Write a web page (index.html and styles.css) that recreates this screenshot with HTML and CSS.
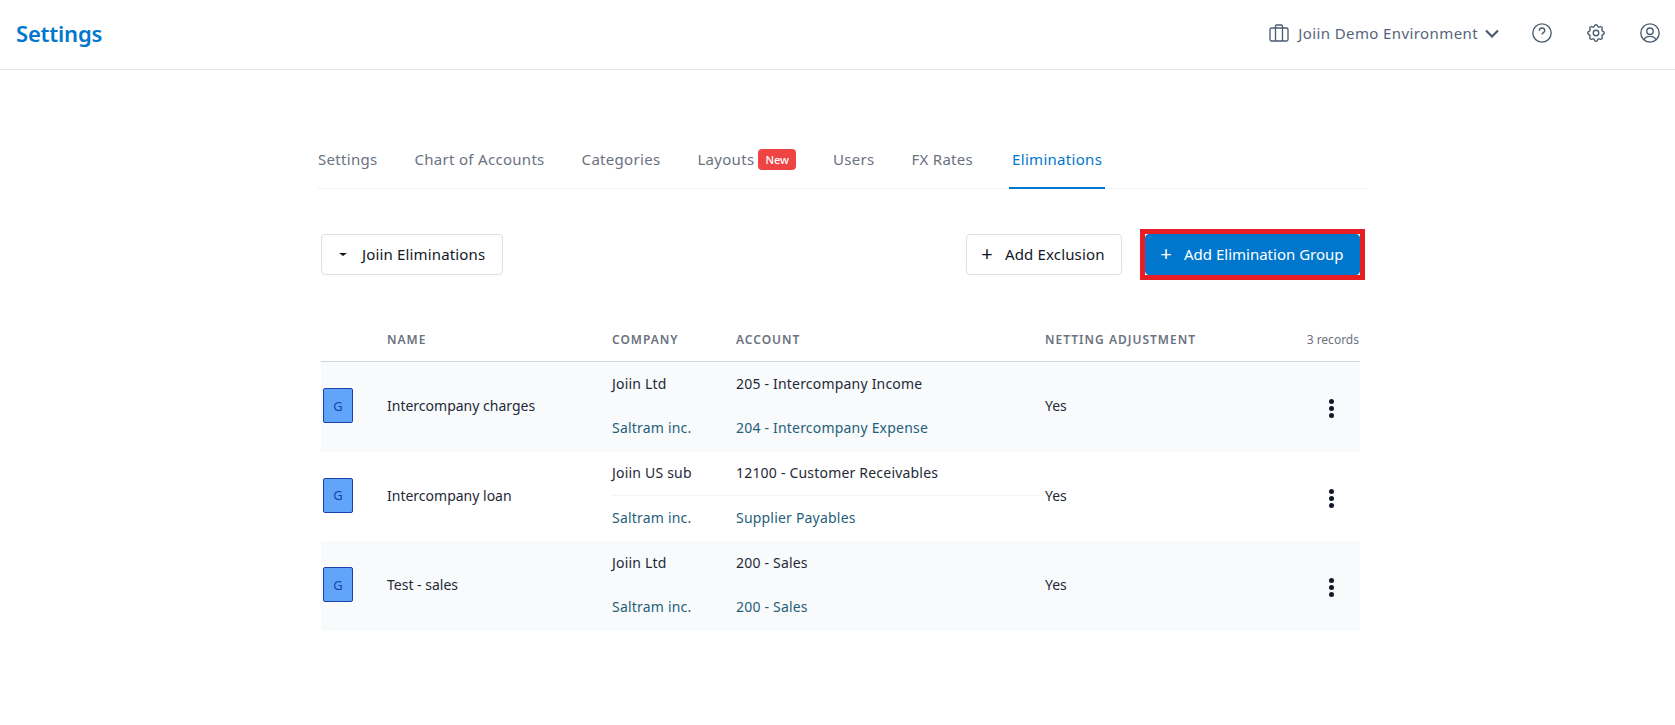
FILE: index.html
```html
<!DOCTYPE html>
<html lang="en">
<head>
<meta charset="utf-8">
<title>Settings</title>
<link rel="stylesheet" href="styles.css">
</head>
<body>
<header class="topbar">
  <h1 class="title">Settings</h1>
  <div class="top-actions">
    <div class="env">
      <svg class="icon-brief" viewBox="0 0 20 18" fill="none" stroke="currentColor" stroke-width="1.3"><rect x="1" y="4" width="18" height="13" rx="1.5"/><path d="M6.5 4V2a1 1 0 0 1 1-1h5a1 1 0 0 1 1 1v2M6.5 4v13M13.500 4v13"/></svg>
      <span class="env-name">Joiin Demo Environment</span>
      <svg class="icon-chev" viewBox="0 0 14 9" fill="none" stroke="currentColor" stroke-width="2.200"><path d="M1 1.500l6 6 6-6"/></svg>
    </div>
    <svg class="icon-top" viewBox="0 0 24 24" fill="none" stroke="currentColor" stroke-width="1.500"><circle cx="12" cy="12" r="10"/><path d="M9 9.500a3 3 0 0 1 6 0c0 1.900-3 2.200-3 4.200M12 16.800v.5"/></svg>
    <svg class="icon-top" viewBox="0 0 24 24" fill="none" stroke="currentColor" stroke-width="1.500" stroke-linejoin="round"><path d="M10.325 4.317c.426-1.756 2.924-1.756 3.35 0a1.724 1.724 0 002.573 1.066c1.543-.94 3.31.826 2.37 2.37a1.724 1.724 0 001.065 2.572c1.756.426 1.756 2.924 0 3.35a1.724 1.724 0 00-1.066 2.573c.94 1.543-.826 3.31-2.37 2.37a1.724 1.724 0 00-2.572 1.065c-.426 1.756-2.924 1.756-3.35 0a1.724 1.724 0 00-2.573-1.066c-1.543.94-3.31-.826-2.37-2.37a1.724 1.724 0 00-1.065-2.572c-1.756-.426-1.756-2.924 0-3.35a1.724 1.724 0 001.066-2.573c-.94-1.543.826-3.31 2.37-2.37.996.608 2.296.07 2.572-1.065z"/><path d="M15 12a3 3 0 11-6 0 3 3 0 016 0z"/></svg>
    <svg class="icon-top" viewBox="0 0 24 24" fill="none" stroke="currentColor" stroke-width="1.500"><circle cx="12" cy="12" r="10"/><circle cx="12" cy="10" r="3.500"/><path d="M5.500 19.500c.8-2.600 3-3.800 6.500-3.800s5.700 1.200 6.500 3.800"/></svg>
  </div>
</header>

<main class="page">
  <nav class="tabs">
    <a class="tab">Settings</a>
    <a class="tab">Chart of Accounts</a>
    <a class="tab">Categories</a>
    <a class="tab">Layouts <span class="badge">New</span></a>
    <a class="tab">Users</a>
    <a class="tab">FX Rates</a>
    <a class="tab active">Eliminations</a>
  </nav>

  <div class="toolbar">
    <button class="btn btn-select"><span class="caret"></span>Joiin Eliminations</button>
    <div class="toolbar-right">
      <button class="btn btn-exclusion"><span class="plus">+</span>Add Exclusion</button>
      <div class="highlight"><button class="btn btn-primary"><span class="plus">+</span>Add Elimination Group</button></div>
    </div>
  </div>

  <section class="table">
    <div class="row head">
      <span></span>
      <span class="th">NAME</span>
      <div class="pairs"><div class="pair"><span class="th">COMPANY</span><span class="th">ACCOUNT</span></div></div>
      <span class="th">NETTING ADJUSTMENT</span>
      <span class="records">3 records</span>
    </div>

    <div class="row body shade">
      <span class="tag">G</span>
      <span>Intercompany charges</span>
      <div class="pairs">
        <div class="pair first"><span>Joiin Ltd</span><span>205 - Intercompany Income</span></div>
        <div class="pair second"><span>Saltram inc.</span><span>204 - Intercompany Expense</span></div>
      </div>
      <span>Yes</span>
      <span class="dots"><i></i><i></i><i></i></span>
    </div>

    <div class="row body">
      <span class="tag">G</span>
      <span>Intercompany loan</span>
      <div class="pairs">
        <div class="pair first"><span>Joiin US sub</span><span>12100 - Customer Receivables</span></div>
        <div class="pair second"><span>Saltram inc.</span><span>Supplier Payables</span></div>
      </div>
      <span>Yes</span>
      <span class="dots"><i></i><i></i><i></i></span>
    </div>

    <div class="row body shade">
      <span class="tag">G</span>
      <span>Test - sales</span>
      <div class="pairs">
        <div class="pair first"><span>Joiin Ltd</span><span>200 - Sales</span></div>
        <div class="pair second"><span>Saltram inc.</span><span>200 - Sales</span></div>
      </div>
      <span>Yes</span>
      <span class="dots"><i></i><i></i><i></i></span>
    </div>
  </section>
</main>
</body>
</html>
```

FILE: styles.css
```css
* { box-sizing: border-box; }
html, body { margin: 0; padding: 0; background: #fff; }
body {
  font-family: "Noto Sans", "Open Sans", sans-serif;
  font-size: 14px;
  color: #111827;
  height: 725px;
  overflow: hidden;
}

.topbar {
  height: 70px;
  display: flex;
  align-items: center;
  justify-content: space-between;
  padding: 0 14px 3px 16px;
  border-bottom: 1px solid #e2e8f0;
}
.title {
  margin: 0;
  font-size: 22px;
  font-weight: 600;
  color: #0077cc;
  letter-spacing: -0.2px;
}
.top-actions { display: flex; align-items: center; gap: 32px; color: #4b5b70; }
.env { display: flex; align-items: center; }
.icon-brief { width: 20px; height: 18px; margin-right: 9px; }
.env-name { font-size: 15px; letter-spacing: 0.4px; color: #55647a; }
.icon-chev { width: 14px; height: 9px; margin-left: 7px; }
.icon-top { width: 22px; height: 22px; display: block; }

.page { width: 1050px; margin-left: 317px; }

.tabs {
  margin-top: 60px;
  height: 59px;
  display: flex;
  gap: 34px;
  border-bottom: 1px solid #f3f4f6;
  font-size: 15px;
}
.tab {
  display: flex;
  align-items: center;
  gap: 4px;
  height: 59px;
  padding: 0 2px 0 1px;
  border-bottom: 2px solid transparent;
  color: #6b7280;
  letter-spacing: 0.3px;
}
.tab.active { color: #0077cc; border-bottom-color: #0077cc; padding: 0 3px; }
.badge {
  background: #ef4444;
  color: #fff;
  font-size: 11px;
  font-weight: 500;
  line-height: 21px;
  height: 21px;
  padding: 0 7px;
  border-radius: 4px;
  letter-spacing: 0;
  margin-top: 2px;
}

.toolbar {
  margin: 40px 7px 0 4px;
  display: flex;
  align-items: center;
  justify-content: space-between;
}
.toolbar-right { display: flex; align-items: center; gap: 18px; }
.btn {
  height: 41px;
  display: flex;
  align-items: center;
  font: inherit;
  font-size: 15px;
  letter-spacing: 0.15px;
  color: #111827;
  background: #fff;
  border: 1px solid #e0e0e0;
  border-radius: 4px;
  padding: 0 17px 2px;
  white-space: nowrap;
}
.btn-select { width: 182px; }
.btn-exclusion { width: 156px; padding: 0 14px 2px; }
.caret {
  width: 0; height: 0;
  border-left: 4px solid transparent;
  border-right: 4px solid transparent;
  border-top: 3px solid #111827;
  margin-right: 15px;
  margin-top: 2px;
}
.plus { font-size: 20px; line-height: 1; width: 12px; margin-right: 12px; text-align: center; }
.highlight { border: 5px solid #e91e24; margin-right: -5px; }
.btn-primary {
  width: 215px;
  background: #0077cc;
  border-color: #0077cc;
  color: #fff;
  padding: 0 14px 2px;
  letter-spacing: 0;
}

.table { margin: 38px 7px 0 4px; }
.row {
  display: grid;
  grid-template-columns: 66px 225px 433px 1fr 60px;
  align-items: center;
}
.row.head { height: 44px; border-bottom: 1px solid #d1d5db; }
.th { font-size: 12px; font-weight: 600; color: #6b7280; letter-spacing: 1px; }
.records { font-size: 12px; color: #6b7280; text-align: right; white-space: nowrap; padding-right: 1px; justify-self: end; }
.pair { display: grid; grid-template-columns: 124px 1fr; align-items: center; }
.row.body { height: 89.500px; color: #1f2937; }
.row.body > span { margin-bottom: 2px; }
.row.body .pairs { height: 100%; display: grid; grid-template-rows: 1fr 1fr; letter-spacing: 0.2px; }
.shade { background: #f8fafc; }
.pair.first { border-bottom: 1px solid #f3f4f6; padding-bottom: 1px; }
.shade .pair.first { border-bottom-color: transparent; }
.pair.second { color: #1f5f7a; padding-bottom: 3px; }
.tag {
  width: 30px;
  height: 35px;
  margin-left: 2px;
  display: flex;
  align-items: center;
  justify-content: center;
  background: #60a5fa;
  border: 1px solid #1e40af;
  border-radius: 2px;
  color: #1e40af;
  font-size: 13px;
}
.dots {
  justify-self: end;
  margin-right: 26px;
  display: flex;
  flex-direction: column;
  gap: 2px;
  margin-top: 6px;
}
.dots i { display: block; width: 5px; height: 5px; border-radius: 50%; background: #111827; }
```
